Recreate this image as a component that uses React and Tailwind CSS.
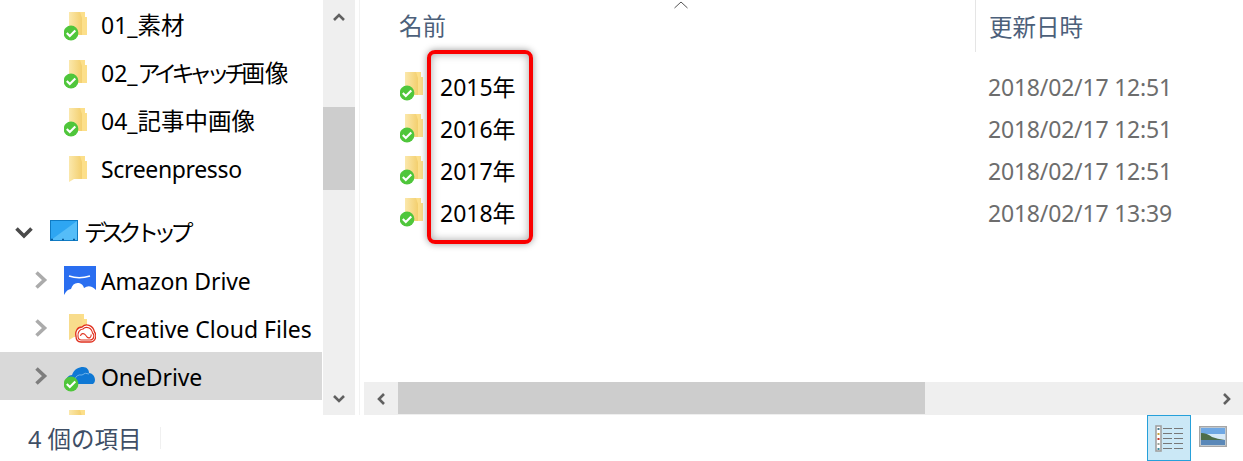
const uiFont = "font-['Noto_Sans','Noto_Sans_CJK_JP',sans-serif]";

function Check({ cx = 7, cy = 21 }) {
  return (
    <g>
      <circle cx={cx} cy={cy} r="7.4" fill="#4fc63b" />
      <path d={`M${cx - 4.2} ${cy} l3 3 l5.5 -5.5`} fill="none" stroke="#fff" strokeWidth="2.1" />
    </g>
  );
}

function FolderIcon({ check = true }) {
  return (
    <svg width="24" height="30" viewBox="0 0 24 30" className="block shrink-0">
      <defs>
        <linearGradient id="door" x1="0" y1="0" x2="1" y2="0">
          <stop offset="0" stopColor="#fbe8ac" />
          <stop offset="1" stopColor="#f3cf6e" />
        </linearGradient>
      </defs>
      <path d="M7 0 H21 V5 H23 V23 H7 Z" fill="#fcdf8a" />
      <path d="M5 0 H16 L18 6 V23 H10 L5 26 Z" fill="url(#door)" />
      {check && <Check />}
    </svg>
  );
}

function Chevron({ dark }) {
  return (
    <svg width="16" height="18" viewBox="0 0 16 18" className="block shrink-0">
      <path d="M4.5 1.5 L12.5 9 L4.5 16.5" fill="none" stroke={dark ? '#7d7d7d' : '#ababab'} strokeWidth="3.6" />
    </svg>
  );
}

function OpenChevron() {
  return (
    <svg width="18" height="12" viewBox="0 0 18 12" className="-ml-px block shrink-0">
      <path d="M1.5 1.5 L9 9 L16.5 1.5" fill="none" stroke="#4a4a4a" strokeWidth="3.6" />
    </svg>
  );
}

function DesktopIcon() {
  return (
    <svg width="30" height="24" viewBox="0 0 30 24" className="block shrink-0">
      <rect x="0.5" y="0.5" width="27" height="20" fill="#2ea6f2" stroke="#0f7bc4" />
      <path d="M1 20 L27 1 V20 Z" fill="#55bdf8" />
      <path d="M1 19.5 H27" stroke="#0b5d9c" strokeWidth="1.5" strokeDasharray="2 9" />
    </svg>
  );
}

function AmazonIcon() {
  return (
    <svg width="32" height="29" viewBox="0 0 32 29" className="block shrink-0">
      <path d="M0 0 H32 V24 Q30 22 28 21 Q24 19 20 22 Q19 18 15 17 Q9 16 7 23 Q3 23 0 29 Z" fill="#2a6ef0" />
      <path d="M5 10 Q15 13.5 26 10" fill="none" stroke="#fff" strokeWidth="1.4" />
    </svg>
  );
}

function CloudFolderIcon() {
  return (
    <svg width="32" height="30" viewBox="0 0 32 30" className="block shrink-0">
      <path d="M7 1 H20 V6 H23 V24 H7 Z" fill="#fcdf8a" />
      <path d="M5 1 H16 L18 6 V24 H10 L5 27 Z" fill="#f8dc8c" />
      <path d="M17 29 H26 C32 29 33 22 30.5 19 C29 12 22 10 18 14 C13 14 11 19 12 23 C12 27 14 29 17 29 Z" fill="#fff" stroke="#e0301e" strokeWidth="1.3" />
      <path d="M17.5 27 H26 C30 27 31 22 28.5 20 C27.5 14.5 22 13 19 16 C15.5 16 13.5 20 14 23 C14 25.5 15.5 27 17.5 27 Z" fill="none" stroke="#e0301e" strokeWidth="1.1" />
      <path d="M16.5 23 C17 20 20 20 21.5 22 L23 24 C25 26 28 24 27 21.5" fill="none" stroke="#e0301e" strokeWidth="1.1" />
    </svg>
  );
}

function OneDriveIcon() {
  return (
    <svg width="32" height="31" viewBox="0 0 32 31" className="block shrink-0">
      <path d="M2 22 C1 17 5 14 8 14 C10 8 15 6 19 6 C23 6 25 9 25 12 C28 12 31 15 31 19 C31 21 30 22 29 23 H4 Z" fill="#0f78d4" />
      <path d="M11 19 Q12 13 18 14 Q21 11 25 13" fill="none" stroke="#6db3ea" strokeWidth="1" />
      <Check cx={7} cy={23} />
    </svg>
  );
}

function DetailsIcon() {
  const colors = ['#4a7a8c', '#c8a23a', '#c0392b', '#9aa59a', '#3a8a9c'];
  return (
    <svg width="28" height="27" viewBox="0 0 28 27" className="block">
      <rect x="1" y="1" width="5" height="25" fill="#fff" stroke="#a0a0a0" strokeWidth="1.6" />
      {colors.map((c, i) => (
        <g key={c}>
          <rect x="2.5" y={3 + i * 5} width="2" height="2" fill={c} />
          <path d={`M8 ${3.5 + i * 5} h9 M19 ${3.5 + i * 5} h9`} stroke="#777" strokeWidth="1" />
        </g>
      ))}
    </svg>
  );
}

function PreviewIcon() {
  return (
    <svg width="28" height="21" viewBox="0 0 28 21" className="block">
      <rect x="0.75" y="0.75" width="26.5" height="19.5" fill="#d6e9f8" stroke="#a6a6a6" strokeWidth="1.5" />
      <rect x="2" y="2" width="24" height="6" fill="#6fa8e4" />
      <path d="M2 7 Q8 7 13 11 Q18 13 26 14 V15 H2 Z" fill="#4d6d4a" />
      <rect x="2" y="14" width="24" height="5" fill="#5a88b8" />
    </svg>
  );
}

// kana is narrow in the original font
function Kana({ children, wide }) {
  return <span className={`text-[23px] ${wide ? 'tracking-[-5.7px]' : 'tracking-[-5.5px]'}`}>{children}</span>;
}

function Kanji({ children }) {
  return <span className="text-[23.5px]">{children}</span>;
}

const treeTop = [
  { id: 1, name: <>01_<Kanji>素材</Kanji></>, check: true },
  { id: 2, name: <>02_<Kana>アイキャッチ</Kana><Kanji>画像</Kanji></>, check: true },
  { id: 3, name: <>04_<Kanji>記事中画像</Kanji></>, check: true },
  { id: 4, name: <span className="relative -top-px tracking-[-0.35px]">Screenpresso</span>, check: false },
];

const files = [
  { name: '2015年', date: '2018/02/17 12:51' },
  { name: '2016年', date: '2018/02/17 12:51' },
  { name: '2017年', date: '2018/02/17 12:51' },
  { name: '2018年', date: '2018/02/17 13:39' },
];

function TreeRow({ icon, children, chevron, selected, upper }) {
  return (
    <div className={`flex h-12 shrink-0 items-center pl-[32px] ${selected ? 'mr-px bg-[#d9d9d9]' : ''}`}>
      <div className="w-[32px]">{chevron}</div>
      <div className={`w-[37px] ${upper ? 'pt-[2px]' : ''}`}>{icon}</div>
      <span className={`whitespace-nowrap ${upper ? '' : 'pt-[2px]'}`}>{children}</span>
    </div>
  );
}

export default function App() {
  return (
    <div className={`flex h-[461px] w-[1243px] flex-col overflow-hidden bg-white text-[23px] text-black ${uiFont}`}>
      <div className="flex h-[415px] shrink-0">
        {/* nav tree */}
        <div className="flex h-full w-[323px] shrink-0 flex-col overflow-hidden pt-[2px]">
          {treeTop.map((f) => (
            <TreeRow key={f.id} upper icon={<FolderIcon check={f.check} />}>{f.name}</TreeRow>
          ))}
          <div className="mt-[14px] flex h-12 shrink-0 items-center pl-[16px]">
            <div className="w-[34px] pt-[2px]"><OpenChevron /></div>
            <div className="w-[34px]"><DesktopIcon /></div>
            <span className="whitespace-nowrap"><Kana wide>デスクトップ</Kana></span>
          </div>
          <TreeRow chevron={<Chevron />} icon={<AmazonIcon />}><span className="tracking-[-0.1px]">Amazon Drive</span></TreeRow>
          <TreeRow chevron={<Chevron />} icon={<CloudFolderIcon />}>Creative Cloud Files</TreeRow>
          <TreeRow selected chevron={<Chevron dark />} icon={<OneDriveIcon />}><span className="tracking-[-0.1px]">OneDrive</span></TreeRow>
          <TreeRow upper icon={<FolderIcon check={false} />}>&nbsp;</TreeRow>
        </div>

        {/* tree scrollbar */}
        <div className="flex h-full w-[32px] shrink-0 flex-col items-center bg-[#efefef]">
          <div className="flex h-[107px] w-full shrink-0 items-start justify-center pt-[12px]">
            <svg width="12" height="10" viewBox="0 0 12 10"><path d="M1 8 L6 3 L11 8" fill="none" stroke="#606060" strokeWidth="2.6" /></svg>
          </div>
          <div className="h-[83px] w-full bg-[#cdcdcd]" />
          <div className="flex-1" />
          <div className="flex h-[33px] w-full items-center justify-center">
            <svg width="12" height="10" viewBox="0 0 12 10"><path d="M1 2 L6 7 L11 2" fill="none" stroke="#606060" strokeWidth="2.6" /></svg>
          </div>
        </div>
        <div className="w-[5px] shrink-0 border-r border-[#f2f2f2]" />

        {/* file list */}
        <div className="relative flex h-full min-w-0 flex-1 flex-col">
          <div className="flex h-[52px] shrink-0 items-center text-[23.5px] text-[#4c607a]">
            <div className="relative h-full w-[616px] shrink-0 border-r border-[#e5e5e5] pl-[39px] leading-[52px]">
              名前
              <svg className="absolute left-[313px] top-0" width="16" height="9" viewBox="0 0 16 9"><path d="M1.5 8 L8 2 L14.5 8" fill="none" stroke="#555" strokeWidth="1" /></svg>
            </div>
            <div className="pl-[13px] pt-[4px]">更新日時</div>
          </div>
          <div className="flex flex-col pt-[14px]">
            {files.map((f) => (
              <div key={f.name} className="flex h-[42px] items-center">
                <div className="ml-[40px] w-[40px] shrink-0"><FolderIcon /></div>
                <div className="w-[548px] shrink-0">{f.name}</div>
                <div className="whitespace-nowrap tracking-[-0.2px] text-[#6d6d6d]">{f.date}</div>
              </div>
            ))}
          </div>

          {/* red annotation */}
          <div className="absolute left-[67px] top-[50px] h-[194px] w-[106px] rounded-[8px] border-[4px] border-[#fa0000] shadow-[0_0_7px_rgba(0,0,0,0.4),inset_0_0_9px_rgba(0,0,0,0.35)]" />

          {/* horizontal scrollbar */}
          <div className="mt-auto ml-[4px] flex h-[33px] shrink-0 bg-[#efefef]">
            <div className="flex w-[34px] shrink-0 items-center justify-center">
              <svg width="10" height="12" viewBox="0 0 10 12"><path d="M8 1 L3 6 L8 11" fill="none" stroke="#606060" strokeWidth="2.6" /></svg>
            </div>
            <div className="h-[32px] w-[527px] bg-[#cdcdcd]" />
            <div className="flex-1" />
            <div className="flex w-[33px] shrink-0 items-center justify-center">
              <svg width="10" height="12" viewBox="0 0 10 12"><path d="M2 1 L7 6 L2 11" fill="none" stroke="#606060" strokeWidth="2.6" /></svg>
            </div>
          </div>
        </div>
      </div>

      {/* status bar */}
      <div className="flex h-[46px] shrink-0 items-center pl-[28px] text-[#3f4f66]">
        <span className="w-[132px] shrink-0 pt-[3px] text-[23.5px]">4 個の項目</span>
        <div className="h-[22px] w-px bg-[#f0f0f0]" />
        <div className="ml-auto flex h-full items-center">
          <div className="flex h-full w-[44px] items-center justify-center border border-[#26a0da] bg-[#cbe8f6]">
            <DetailsIcon />
          </div>
          <div className="ml-[8px] mr-[16px] pb-[4px]"><PreviewIcon /></div>
        </div>
      </div>
    </div>
  );
}
